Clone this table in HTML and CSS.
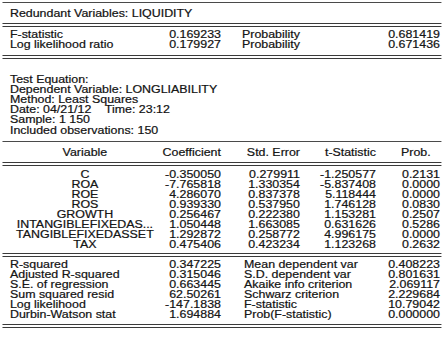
FILE: index.html
```html
<!DOCTYPE html>
<html>
<head>
<meta charset="utf-8">
<link rel="stylesheet" href="styles.css">
<title>Redundant Variables</title>
</head>
<body>
<div class="page">
  <div class="sec title">Redundant Variables: LIQUIDITY</div>

  <div class="sec ftest">
    <span class="lbl">F-statistic</span><span class="num">0.169233</span><span class="lbl2">Probability</span><span class="num2">0.681419</span>
    <span class="lbl">Log likelihood ratio</span><span class="num">0.179927</span><span class="lbl2">Probability</span><span class="num2">0.671436</span>
  </div>

  <div class="sec info">
    <div>Test Equation:</div>
    <div>Dependent Variable: LONGLIABILITY</div>
    <div>Method: Least Squares</div>
    <div>Date: 04/21/12&nbsp;&nbsp;&nbsp; Time: 23:12</div>
    <div>Sample: 1 150</div>
    <div>Included observations: 150</div>
  </div>

  <div class="sec coef-head">
    <span class="var">Variable</span><span class="c2">Coefficient</span><span class="c3">Std. Error</span><span class="c4">t-Statistic</span><span class="c5h">Prob.</span>
  </div>

  <div class="sec coef-body">
    <span class="var">C</span><span class="c2">-0.350050</span><span class="c3">0.279911</span><span class="c4">-1.250577</span><span class="c5">0.2131</span>
    <span class="var">ROA</span><span class="c2">-7.765818</span><span class="c3">1.330354</span><span class="c4">-5.837408</span><span class="c5">0.0000</span>
    <span class="var">ROE</span><span class="c2">4.286070</span><span class="c3">0.837378</span><span class="c4">5.118444</span><span class="c5">0.0000</span>
    <span class="var">ROS</span><span class="c2">0.939330</span><span class="c3">0.537950</span><span class="c4">1.746128</span><span class="c5">0.0830</span>
    <span class="var">GROWTH</span><span class="c2">0.256467</span><span class="c3">0.222380</span><span class="c4">1.153281</span><span class="c5">0.2507</span>
    <span class="var">INTANGIBLEFIXEDAS...</span><span class="c2">1.050448</span><span class="c3">1.663085</span><span class="c4">0.631626</span><span class="c5">0.5286</span>
    <span class="var">TANGIBLEFIXEDASSET</span><span class="c2">1.292872</span><span class="c3">0.258772</span><span class="c4">4.996175</span><span class="c5">0.0000</span>
    <span class="var">TAX</span><span class="c2">0.475406</span><span class="c3">0.423234</span><span class="c4">1.123268</span><span class="c5">0.2632</span>
  </div>

  <div class="sec stats">
    <span class="lbl">R-squared</span><span class="num">0.347225</span><span class="lbl2">Mean dependent var</span><span class="num2">0.408223</span>
    <span class="lbl">Adjusted R-squared</span><span class="num">0.315046</span><span class="lbl2">S.D. dependent var</span><span class="num2">0.801631</span>
    <span class="lbl">S.E. of regression</span><span class="num">0.663445</span><span class="lbl2">Akaike info criterion</span><span class="num2">2.069117</span>
    <span class="lbl">Sum squared resid</span><span class="num">62.50261</span><span class="lbl2">Schwarz criterion</span><span class="num2">2.229684</span>
    <span class="lbl">Log likelihood</span><span class="num">-147.1838</span><span class="lbl2">F-statistic</span><span class="num2">10.79042</span>
    <span class="lbl">Durbin-Watson stat</span><span class="num">1.694884</span><span class="lbl2">Prob(F-statistic)</span><span class="num2">0.000000</span>
  </div>
</div>
</body>
</html>
```

FILE: styles.css
```css
html, body {
  margin: 0;
  padding: 0;
  background: #ffffff;
}

body {
  font-family: "Liberation Sans", Arial, sans-serif;
  font-size: 10px;
  color: #0a0a0a;
  overflow: hidden;
  -webkit-text-stroke: 0.2px #2a2a2a;
}

/* The original output is rendered horizontally stretched */
.page {
  box-sizing: border-box;
  width: 356.45px;
  padding-left: 2.4px;
  transform: scaleX(1.24);
  transform-origin: 0 0;
}

.sec {
  line-height: 10px;
  white-space: nowrap;
}

.title {
  margin-top: 2px;
  border-top: 1px solid #4a4a4a;
  border-bottom: 4px double #3a3a3a;
  padding: 5.7px 0 4.3px 5.65px;
}

.ftest,
.stats {
  display: grid;
  grid-template-columns: 120px 55.8px 120px 1fr;
  border-bottom: 4px double #3a3a3a;
}

.ftest {
  padding: 2.7px 0 5.3px;
}

.stats {
  padding: 3px 0 4.3px;
}

.lbl {
  padding-left: 5.65px;
}

.num {
  text-align: right;
}

.lbl2 {
  padding-left: 17px;
}

.stats .lbl2 {
  padding-left: 18.6px;
}

.num2 {
  text-align: right;
  padding-right: 1.65px;
}

.info {
  padding: 15.7px 0 5.1px 5.65px;
  line-height: 10.2px;
}

.coef-head,
.coef-body {
  display: grid;
  grid-template-columns: 125px 50.8px 63.7px 61.3px 1fr;
}

.coef-head {
  border-top: 1px solid #4a4a4a;
  border-bottom: 4px double #3a3a3a;
  padding: 5.7px 0 4.3px;
}

.coef-body {
  padding: 3.7px 0 3px;
  border-bottom: 4px double #3a3a3a;
}

.var {
  text-align: center;
  padding-left: 7.2px;
}

.c2,
.c3,
.c4 {
  text-align: right;
}

.c5 {
  text-align: right;
  padding-right: 1.65px;
}

.c5h {
  text-align: right;
  padding-right: 9.15px;
}
```
